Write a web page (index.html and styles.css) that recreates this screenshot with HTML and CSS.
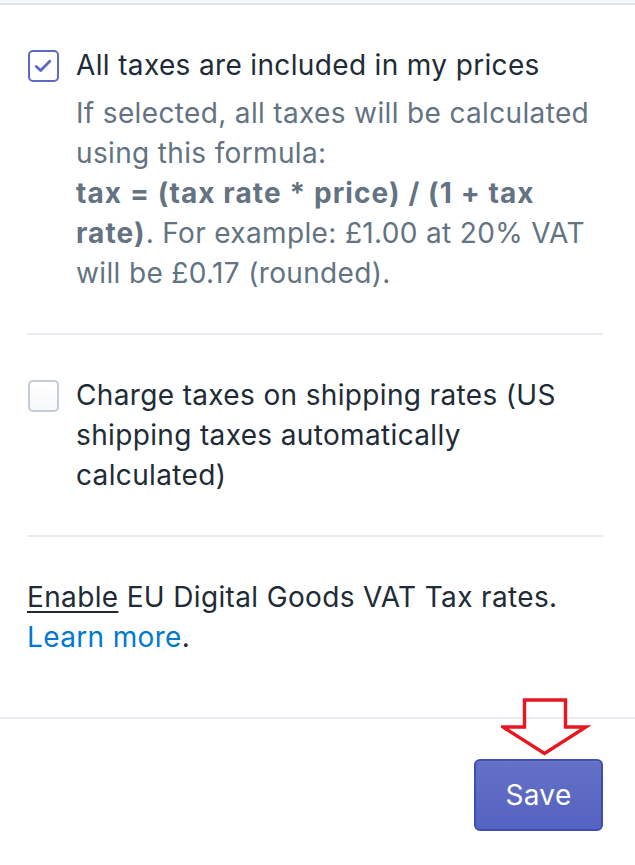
FILE: index.html
```html
<!DOCTYPE html>
<html lang="en">
<head>
<meta charset="utf-8">
<title>Taxes</title>
<link rel="stylesheet" href="styles.css">
</head>
<body>
<div class="page">
  <div class="topbar"></div>
  <main class="card">
    <section class="section">
      <div class="choice">
        <span class="box box--checked">
          <svg width="30" height="32" viewBox="0 0 30 32" aria-hidden="true">
            <path d="M7 16.5 L11.8 21 L22 10.8" fill="none" stroke="#5c6ac4" stroke-width="3.2" stroke-linecap="round" stroke-linejoin="round"/>
          </svg>
        </span>
        <div class="choice-body">
          <div class="label">All taxes are included in my prices</div>
          <p class="help">If selected, all taxes will be calculated using this formula:<br><strong>tax = (tax rate * price) / (1 + tax rate)</strong>. For example: £1.00 at 20% VAT will be £0.17 (rounded).</p>
        </div>
      </div>
    </section>
    <section class="section section--mid">
      <div class="choice">
        <span class="box"></span>
        <div class="choice-body">
          <div class="label">Charge taxes on shipping rates (US shipping taxes automatically calculated)</div>
        </div>
      </div>
    </section>
    <section class="section section--last">
      <p class="text"><span class="u">Enable</span> EU Digital Goods VAT Tax rates. <a class="link" href="#">Learn more</a>.</p>
    </section>
  </main>
  <footer class="footer">
    <button class="btn" type="button">Save</button>
    <svg class="arrow" width="90" height="62" viewBox="0 0 90 62" aria-hidden="true">
      <polygon points="23.5,3 64.5,3 64.5,30 85,30 43.5,56.5 2,30 23.5,30" fill="none" stroke="#e8171f" stroke-width="3.4" stroke-linejoin="miter"/>
    </svg>
  </footer>
</div>
</body>
</html>
```
FILE: styles.css
```css
html, body {
  margin: 0;
  padding: 0;
  background: #ffffff;
}
body {
  font-family: Inter, "Noto Sans", "Liberation Sans", sans-serif;
  font-size: 28px;
  line-height: 40px;
  letter-spacing: 0.35px;
  color: #212b36;
}
.page {
  width: 635px;
}
.topbar {
  height: 3px;
  background: #f4f6f8;
  border-bottom: 2px solid #dfe3e8;
}
.card {
  padding: 0 32px 0 27px;
}
.section {
  padding: 40px 0 40px;
  border-bottom: 2px solid #e8ecf0;
}
.section--mid {
  padding: 40px 0 40px;
}
.section--last {
  border-bottom: none;
  padding: 40px 0 60px;
}
.choice {
  display: flex;
  align-items: flex-start;
}
.box {
  flex: 0 0 auto;
  box-sizing: border-box;
  width: 31px;
  height: 32px;
  margin: 5px 17px 0 1px;
  border: 2px solid #c4cdd5;
  border-radius: 5px;
  background: linear-gradient(#ffffff, #f7f8fa);
  display: flex;
  align-items: center;
  justify-content: center;
}
.box--checked {
  border-color: #5c6ac4;
  background: #ffffff;
}
.box svg {
  display: block;
}
.choice-body {
  flex: 1 1 auto;
  min-width: 0;
}
.label {
  color: #212b36;
}
.help {
  margin: 8px 0 0;
  color: #637381;
}
.help strong {
  font-weight: 700;
  letter-spacing: 1.1px;
}
.text {
  margin: 0;
  color: #212b36;
}
.u {
  text-decoration: underline;
  text-decoration-thickness: 2px;
  text-underline-offset: 4px;
}
.link {
  color: #007ace;
  text-decoration: none;
}
.footer {
  position: relative;
  border-top: 2px solid #e8ecf0;
  padding: 40px 32px 34px 0;
  display: flex;
  justify-content: flex-end;
}
.btn {
  box-sizing: border-box;
  width: 129px;
  height: 72px;
  border: 2px solid #3f4eae;
  border-radius: 6px;
  background: linear-gradient(#6371c7, #5563c1);
  color: #ffffff;
  font-family: Inter, "Noto Sans", "Liberation Sans", sans-serif;
  font-size: 28px;
  line-height: 40px;
  letter-spacing: 0.35px;
  padding: 0;
  box-shadow: inset 0 1px 0 0 #6f7bcb;
}
.arrow {
  position: absolute;
  left: 501px;
  top: -22px;
}
```
